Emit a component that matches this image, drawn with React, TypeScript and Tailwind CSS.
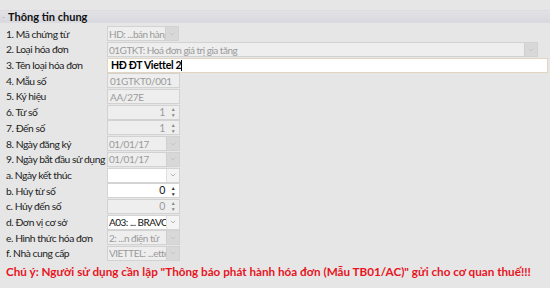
import { ChevronDown } from "lucide-react";

type Kind = "select" | "input" | "spin" | "text";

type Row = {
  label: string;
  kind: Kind;
  value: string;
  width: string;
  enabled?: boolean;
};

const rows: Row[] = [
  { label: "1. Mã chứng từ", kind: "select", value: "HD: ...bán hàng", width: "w-[72px]" },
  { label: "2. Loại hóa đơn", kind: "select", value: "01GTKT: Hoá đơn giá trị gia tăng", width: "w-[431px]" },
  { label: "3. Tên loại hóa đơn", kind: "text", value: "HĐ ĐT Viettel 2", width: "w-[441px]", enabled: true },
  { label: "4. Mẫu số", kind: "input", value: "01GTKT0/001", width: "w-[73px]" },
  { label: "5. Ký hiệu", kind: "input", value: "AA/27E", width: "w-[73px]" },
  { label: "6. Từ số", kind: "spin", value: "1", width: "w-[73px]" },
  { label: "7. Đến số", kind: "spin", value: "1", width: "w-[73px]" },
  { label: "8. Ngày đăng ký", kind: "select", value: "01/01/17", width: "w-[73px]" },
  { label: "9. Ngày bắt đầu sử dụng", kind: "select", value: "01/01/17", width: "w-[73px]" },
  { label: "a. Ngày kết thúc", kind: "select", value: "", width: "w-[73px]", enabled: true },
  { label: "b. Hủy từ số", kind: "spin", value: "0", width: "w-[73px]", enabled: true },
  { label: "c. Hủy đến số", kind: "spin", value: "0", width: "w-[73px]" },
  { label: "d. Đơn vị cơ sở", kind: "select", value: "A03: ... BRAVO", width: "w-[73px]", enabled: true },
  { label: "e. Hình thức hóa đơn", kind: "select", value: "2: ...n điện tử", width: "w-[73px]" },
  { label: "f. Nhà cung cấp", kind: "select", value: "VIETTEL: ...ettel", width: "w-[73px]" },
];

const Field = ({ row }: { row: Row }) => {
  const on = row.enabled;
  const box = on
    ? "bg-white border-[#d4d4d4] text-[#111]"
    : "bg-[#eeeeee] border-[#d2d2d2] text-[#9a9a9a]";

  if (row.kind === "text") {
    return (
      <div className={`${row.width} h-[15px] flex items-center border border-[#e2d6c2] bg-white px-[3px] text-black font-bold text-[10.5px]`}>
        {row.value}
        <span className="w-px h-[11px] bg-black" />
      </div>
    );
  }

  if (row.kind === "input") {
    return (
      <div className={`${row.width} h-[15px] flex items-center border px-[2px] ${box}`}>
        {row.value}
      </div>
    );
  }

  if (row.kind === "spin") {
    return (
      <div className={`${row.width} h-[15px] flex items-stretch border ${box}`}>
        <div className="flex-1 flex items-center justify-end pr-[2px] text-[10.5px]">{row.value}</div>
        <div className={`w-[12px] flex flex-col items-center justify-center gap-[2px] text-[5px] leading-[4px] ${on ? "text-[#333]" : "text-[#888]"}`}>
          <span>▲</span>
          <span>▼</span>
        </div>
      </div>
    );
  }

  return (
    <div className={`${row.width} h-[15px] flex items-stretch border ${box}`}>
      <div className="flex-1 min-w-0 overflow-hidden whitespace-nowrap flex items-center pl-[1px] tracking-[-0.5px]">{row.value}</div>
      <div
        className={`w-[13px] shrink-0 flex items-center justify-center border-l ${
          on ? "bg-[#f4f4f4] border-[#e0e0e0] text-[#777]" : "bg-[#d8d8d8] border-[#cfcfcf] text-[#b0b0b0]"
        }`}
      >
        <ChevronDown size={8} strokeWidth={1.5} />
      </div>
    </div>
  );
};

export default function App() {
  return (
    <div className="w-[550px] h-[288px] overflow-hidden bg-[#e6e6e6] text-[10px] tracking-[-0.3px] leading-none font-['Lato','Noto_Sans',sans-serif] text-[#222]">
      <div className="h-[10px]" />
      <div className="h-[13px] flex items-center bg-gradient-to-b from-[#e2e2e6] to-[#d8d8de] border-y border-[#dcdce0]">
        <span className="w-[8px] text-[#aaa] text-[8px] pl-[2px]">-</span>
        <span className="font-bold text-[#111] text-[11px] tracking-normal">Thông tin chung</span>
      </div>
      <div className="h-[3px]" />
      <div className="flex flex-col">
        {rows.map((row) => (
          <div key={row.label} className="h-[15.7px] flex items-center">
            <div className="w-[107px] pl-[6px] whitespace-nowrap text-[10.3px] tracking-[-0.45px]">{row.label}</div>
            <Field row={row} />
          </div>
        ))}
      </div>
      <div className="pl-[6px] pt-[5px] font-bold text-[11.7px] tracking-normal text-[#e8141e] whitespace-nowrap">
        Chú ý: Người sử dụng cần lập "Thông báo phát hành hóa đơn (Mẫu TB01/AC)" gửi cho cơ quan thuế!!!
      </div>
    </div>
  );
}
